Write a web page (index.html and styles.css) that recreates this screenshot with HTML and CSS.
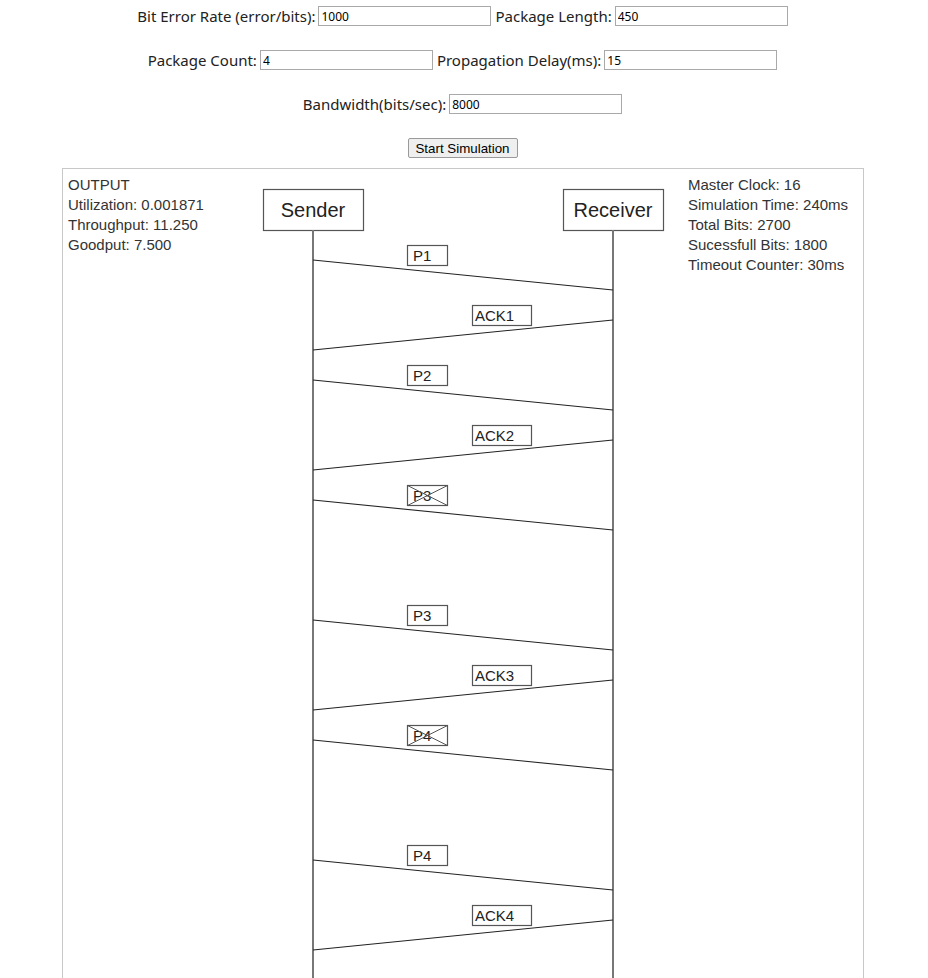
FILE: index.html
```html
<!DOCTYPE html>
<html>
<head>
<meta charset="utf-8">
<link rel="stylesheet" href="styles.css">
</head>
<body>
<div class="form">
  <div class="row">
    <label class="lbl">Bit Error Rate (error/bits):</label><input class="inp" type="text" value="1000">
    <label class="lbl second">Package Length:</label><input class="inp" type="text" value="450">
  </div>
  <div class="row">
    <label class="lbl">Package Count:</label><input class="inp" type="text" value="4">
    <label class="lbl second">Propagation Delay(ms):</label><input class="inp" type="text" value="15">
  </div>
  <div class="row">
    <label class="lbl">Bandwidth(bits/sec):</label><input class="inp" type="text" value="8000">
  </div>
  <div class="row">
    <button class="btn">Start Simulation</button>
  </div>
</div>
<div class="output">
  <svg class="diagram" width="800" height="830" viewBox="0 0 800 830" xmlns="http://www.w3.org/2000/svg">
    <g class="stats">
      <text x="5" y="21">OUTPUT</text>
      <text x="5" y="41">Utilization: 0.001871</text>
      <text x="5" y="61">Throughput: 11.250</text>
      <text x="5" y="81">Goodput: 7.500</text>
      <text x="625" y="21">Master Clock: 16</text>
      <text x="625" y="41">Simulation Time: 240ms</text>
      <text x="625" y="61">Total Bits: 2700</text>
      <text x="625" y="81">Sucessfull Bits: 1800</text>
      <text x="625" y="101">Timeout Counter: 30ms</text>
    </g>
    <g class="nodes">
      <rect x="200.5" y="20.5" width="100" height="41"/>
      <rect x="500.5" y="20.5" width="100" height="41"/>
      <text class="node-text" x="250" y="48">Sender</text>
      <text class="node-text" x="550" y="48">Receiver</text>
    </g>
    <g class="life">
      <line x1="250" y1="61" x2="250" y2="830"/>
      <line x1="550" y1="61" x2="550" y2="830"/>
    </g>
    <g class="msgs">
      <line x1="250" y1="91" x2="550" y2="121"/>
      <line x1="550" y1="151" x2="250" y2="181"/>
      <line x1="250" y1="211" x2="550" y2="241"/>
      <line x1="550" y1="271" x2="250" y2="301"/>
      <line x1="250" y1="331" x2="550" y2="361"/>
      <line x1="250" y1="451" x2="550" y2="481"/>
      <line x1="550" y1="511" x2="250" y2="541"/>
      <line x1="250" y1="571" x2="550" y2="601"/>
      <line x1="250" y1="691" x2="550" y2="721"/>
      <line x1="550" y1="751" x2="250" y2="781"/>
    </g>
    <g class="labels">
      <rect x="344.5" y="76.5" width="40" height="20"/><text x="350" y="92">P1</text>
      <rect x="409.5" y="136.5" width="59" height="20"/><text x="412" y="152">ACK1</text>
      <rect x="344.5" y="196.5" width="40" height="20"/><text x="350" y="212">P2</text>
      <rect x="409.5" y="256.5" width="59" height="20"/><text x="412" y="272">ACK2</text>
      <text x="350" y="332">P3</text>
      <rect x="344.5" y="316.5" width="40" height="20"/>
      <line x1="344.5" y1="316.5" x2="384.5" y2="336.5"/><line x1="384.5" y1="316.5" x2="344.5" y2="336.5"/>
      <rect x="344.5" y="436.5" width="40" height="20"/><text x="350" y="452">P3</text>
      <rect x="409.5" y="496.5" width="59" height="20"/><text x="412" y="512">ACK3</text>
      <text x="350" y="572">P4</text>
      <rect x="344.5" y="556.5" width="40" height="20"/>
      <line x1="344.5" y1="556.5" x2="384.5" y2="576.5"/><line x1="384.5" y1="556.5" x2="344.5" y2="576.5"/>
      <rect x="344.5" y="676.5" width="40" height="20"/><text x="350" y="692">P4</text>
      <rect x="409.5" y="736.5" width="59" height="20"/><text x="412" y="752">ACK4</text>
    </g>
  </svg>
</div>
</body>
</html>
```

FILE: styles.css
```css
html, body {
  margin: 0;
  padding: 0;
  background: #ffffff;
}
body {
  font-family: "Noto Sans", "Liberation Sans", sans-serif;
  color: #222;
}
.form {
  padding-top: 6px;
  padding-right: 3px;
  display: flex;
  flex-direction: column;
  gap: 24px;
}
.row {
  display: flex;
  justify-content: center;
  align-items: center;
  height: 20px;
}
.lbl {
  font-size: 15px;
  margin-right: 3px;
  white-space: nowrap;
}
.lbl.second {
  margin-left: 4px;
}
.inp {
  box-sizing: border-box;
  width: 173px;
  height: 20px;
  border: 1px solid #a9a9a9;
  padding: 0 2px;
  font-family: "Noto Sans", "Liberation Sans", sans-serif;
  font-size: 12px;
  color: #000;
  margin: 0;
  outline: none;
}
.btn {
  box-sizing: border-box;
  width: 110px;
  height: 20px;
  padding: 0;
  font-family: "Liberation Sans", Arial, sans-serif;
  font-size: 13.33px;
  color: #000;
  background: #efefef;
  border: 1px solid #9a9a9a;
  border-radius: 2px;
}
.output {
  width: 800px;
  height: 900px;
  margin: 10px 0 0 calc(50% - 402px);
  border: 1px solid #c8c8c8;
  overflow: hidden;
}
.diagram {
  display: block;
}
.stats text {
  font-family: "Liberation Sans", Arial, sans-serif;
  font-size: 15px;
  fill: #333;
}
.nodes rect {
  fill: #fff;
  stroke: #555;
  stroke-width: 1.2;
}
.node-text {
  font-family: "Liberation Sans", Arial, sans-serif;
  font-size: 20px;
  fill: #222;
  text-anchor: middle;
}
.life line {
  stroke: #777;
  stroke-width: 2;
}
.msgs line {
  stroke: #222;
  stroke-width: 1.1;
}
.labels rect {
  fill: none;
  stroke: #555;
  stroke-width: 1.2;
}
.labels line {
  stroke: #555;
  stroke-width: 1;
}
.labels text {
  font-family: "Liberation Sans", Arial, sans-serif;
  font-size: 15px;
  fill: #222;
}
```
